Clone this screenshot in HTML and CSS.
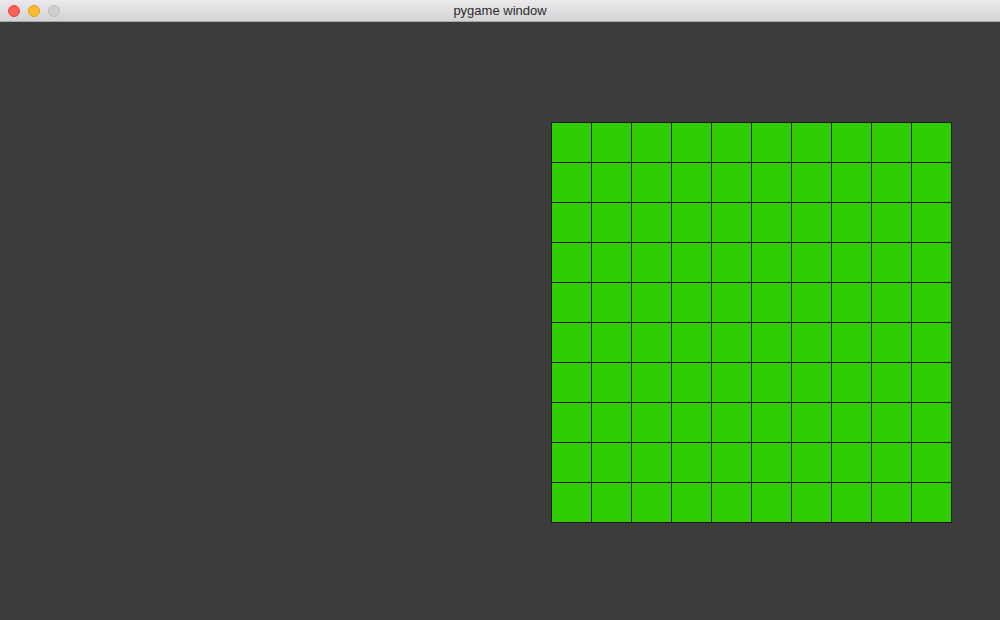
FILE: index.html
```html
<!DOCTYPE html>
<html>
<head>
<meta charset="utf-8">
<title>pygame window</title>
<link rel="stylesheet" href="styles.css">
</head>
<body>
<div class="window">
  <div class="titlebar">
    <div class="lights">
      <span class="light red"></span>
      <span class="light yellow"></span>
      <span class="light grey"></span>
    </div>
    <div class="title">pygame window</div>
  </div>
  <div class="content">
    <div class="board">
      <div class="cell"></div><div class="cell"></div><div class="cell"></div><div class="cell"></div><div class="cell"></div><div class="cell"></div><div class="cell"></div><div class="cell"></div><div class="cell"></div><div class="cell"></div>
      <div class="cell"></div><div class="cell"></div><div class="cell"></div><div class="cell"></div><div class="cell"></div><div class="cell"></div><div class="cell"></div><div class="cell"></div><div class="cell"></div><div class="cell"></div>
      <div class="cell"></div><div class="cell"></div><div class="cell"></div><div class="cell"></div><div class="cell"></div><div class="cell"></div><div class="cell"></div><div class="cell"></div><div class="cell"></div><div class="cell"></div>
      <div class="cell"></div><div class="cell"></div><div class="cell"></div><div class="cell"></div><div class="cell"></div><div class="cell"></div><div class="cell"></div><div class="cell"></div><div class="cell"></div><div class="cell"></div>
      <div class="cell"></div><div class="cell"></div><div class="cell"></div><div class="cell"></div><div class="cell"></div><div class="cell"></div><div class="cell"></div><div class="cell"></div><div class="cell"></div><div class="cell"></div>
      <div class="cell"></div><div class="cell"></div><div class="cell"></div><div class="cell"></div><div class="cell"></div><div class="cell"></div><div class="cell"></div><div class="cell"></div><div class="cell"></div><div class="cell"></div>
      <div class="cell"></div><div class="cell"></div><div class="cell"></div><div class="cell"></div><div class="cell"></div><div class="cell"></div><div class="cell"></div><div class="cell"></div><div class="cell"></div><div class="cell"></div>
      <div class="cell"></div><div class="cell"></div><div class="cell"></div><div class="cell"></div><div class="cell"></div><div class="cell"></div><div class="cell"></div><div class="cell"></div><div class="cell"></div><div class="cell"></div>
      <div class="cell"></div><div class="cell"></div><div class="cell"></div><div class="cell"></div><div class="cell"></div><div class="cell"></div><div class="cell"></div><div class="cell"></div><div class="cell"></div><div class="cell"></div>
      <div class="cell"></div><div class="cell"></div><div class="cell"></div><div class="cell"></div><div class="cell"></div><div class="cell"></div><div class="cell"></div><div class="cell"></div><div class="cell"></div><div class="cell"></div>
    </div>
  </div>
</div>
</body>
</html>
```

FILE: styles.css
```css
html, body {
  margin: 0;
  padding: 0;
  background: #3c3c3c;
}
.window {
  width: 1000px;
  height: 620px;
  display: flex;
  flex-direction: column;
  font-family: "Liberation Sans", "DejaVu Sans", sans-serif;
}
.titlebar {
  height: 21px;
  border-bottom: 1px solid #a9a7a9;
  background: linear-gradient(#ebe9eb, #d4d2d4);
  display: flex;
  align-items: center;
  position: relative;
}
.lights {
  display: flex;
  gap: 8px;
  padding-left: 8px;
}
.light {
  width: 12px;
  height: 12px;
  border-radius: 50%;
  box-sizing: border-box;
}
.red { background: #fc5f57; border: 1px solid #e2463f; }
.yellow { background: #fdbc2e; border: 1px solid #e1a116; }
.grey { background: #d0ced0; border: 1px solid #bdbbbd; }
.title {
  position: absolute;
  left: 0;
  right: 0;
  top: 0;
  height: 21px;
  line-height: 22px;
  text-align: center;
  font-size: 13px;
  color: #2c2c2c;
}
.content {
  flex: 1;
  padding: 100px 0 0 551px;
}
.board {
  display: grid;
  grid-template-columns: repeat(10, 39px);
  grid-auto-rows: 39px;
  gap: 1px;
  padding: 1px;
  width: max-content;
  background: #1c1c1c;
}
.cell {
  background: #2ecc00;
}
```
